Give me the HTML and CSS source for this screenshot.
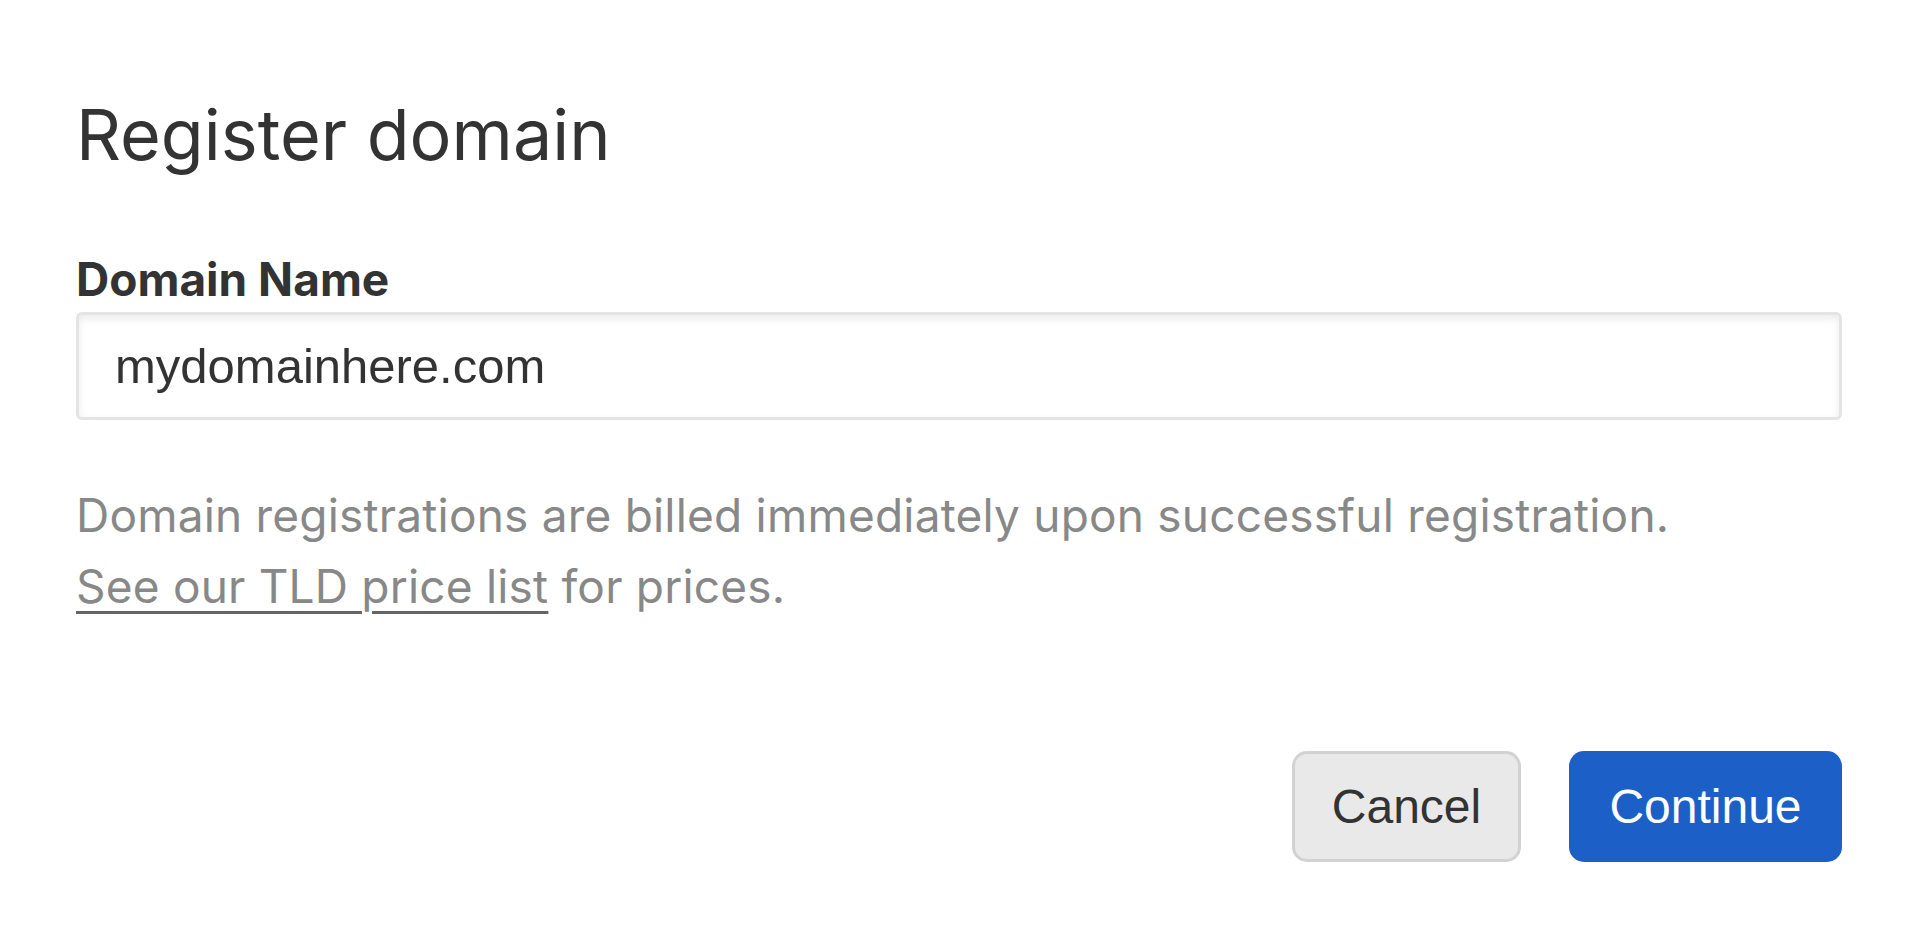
FILE: index.html
```html
<!DOCTYPE html>
<html lang="en">
<head>
<meta charset="utf-8">
<title>Register domain</title>
<link rel="stylesheet" href="styles.css">
</head>
<body>
<div class="dialog">
  <h1 class="title">Register domain</h1>
  <form class="form">
    <label class="label" for="domain">Domain Name</label>
    <input class="input" id="domain" type="text" value="mydomainhere.com">
    <p class="help">Domain registrations are billed immediately upon successful registration.<br><a class="link" href="#">See our TLD price list</a> for prices.</p>
    <div class="actions">
      <button type="button" class="btn btn-cancel">Cancel</button>
      <button type="button" class="btn btn-primary">Continue</button>
    </div>
  </form>
</div>
</body>
</html>
```

FILE: styles.css
```css
html, body {
  margin: 0;
  padding: 0;
  background: #ffffff;
}

body {
  font-family: Inter, Roboto, "Liberation Sans", Arial, sans-serif;
  color: #333333;
}

.dialog {
  padding: 93px 78px 0 76px;
}

.title {
  margin: 0 0 75px 0;
  font-size: 70px;
  line-height: 84px;
  font-weight: 400;
  color: #333333;
}

.form {
  display: flex;
  flex-direction: column;
  margin: 0;
}

.label {
  font-size: 46px;
  line-height: 54px;
  font-weight: 700;
  color: #333333;
  margin-bottom: 6px;
}

.input {
  box-sizing: border-box;
  height: 108px;
  width: 100%;
  margin: 0;
  padding: 0 36px;
  font-family: "Liberation Sans", Arial, sans-serif;
  font-size: 49px;
  color: #333333;
  background: #ffffff;
  border: 3px solid #e4e4e4;
  border-radius: 6px;
  box-shadow: inset 0 4px 8px rgba(0, 0, 0, 0.08);
  outline: none;
}

.help {
  margin: 60px 0 0 0;
  font-size: 46px;
  line-height: 71px;
  letter-spacing: 0.2px;
  color: #888888;
}

.link {
  color: #888888;
  text-decoration: underline;
  text-decoration-color: #666666;
  text-underline-offset: 8px;
  text-decoration-thickness: 3px;
}

.actions {
  display: flex;
  justify-content: flex-end;
  gap: 48px;
  margin-top: 129px;
}

.btn {
  box-sizing: border-box;
  height: 111px;
  font-family: "Liberation Sans", Arial, sans-serif;
  font-size: 48px;
  border-radius: 15px;
  cursor: pointer;
}

.btn-cancel {
  width: 229px;
  background: #e9e9e9;
  color: #333333;
  border: 3px solid #d2d2d2;
}

.btn-primary {
  width: 273px;
  background: #1b5fc7;
  color: #ffffff;
  border: 3px solid #1b5fc7;
}
```
